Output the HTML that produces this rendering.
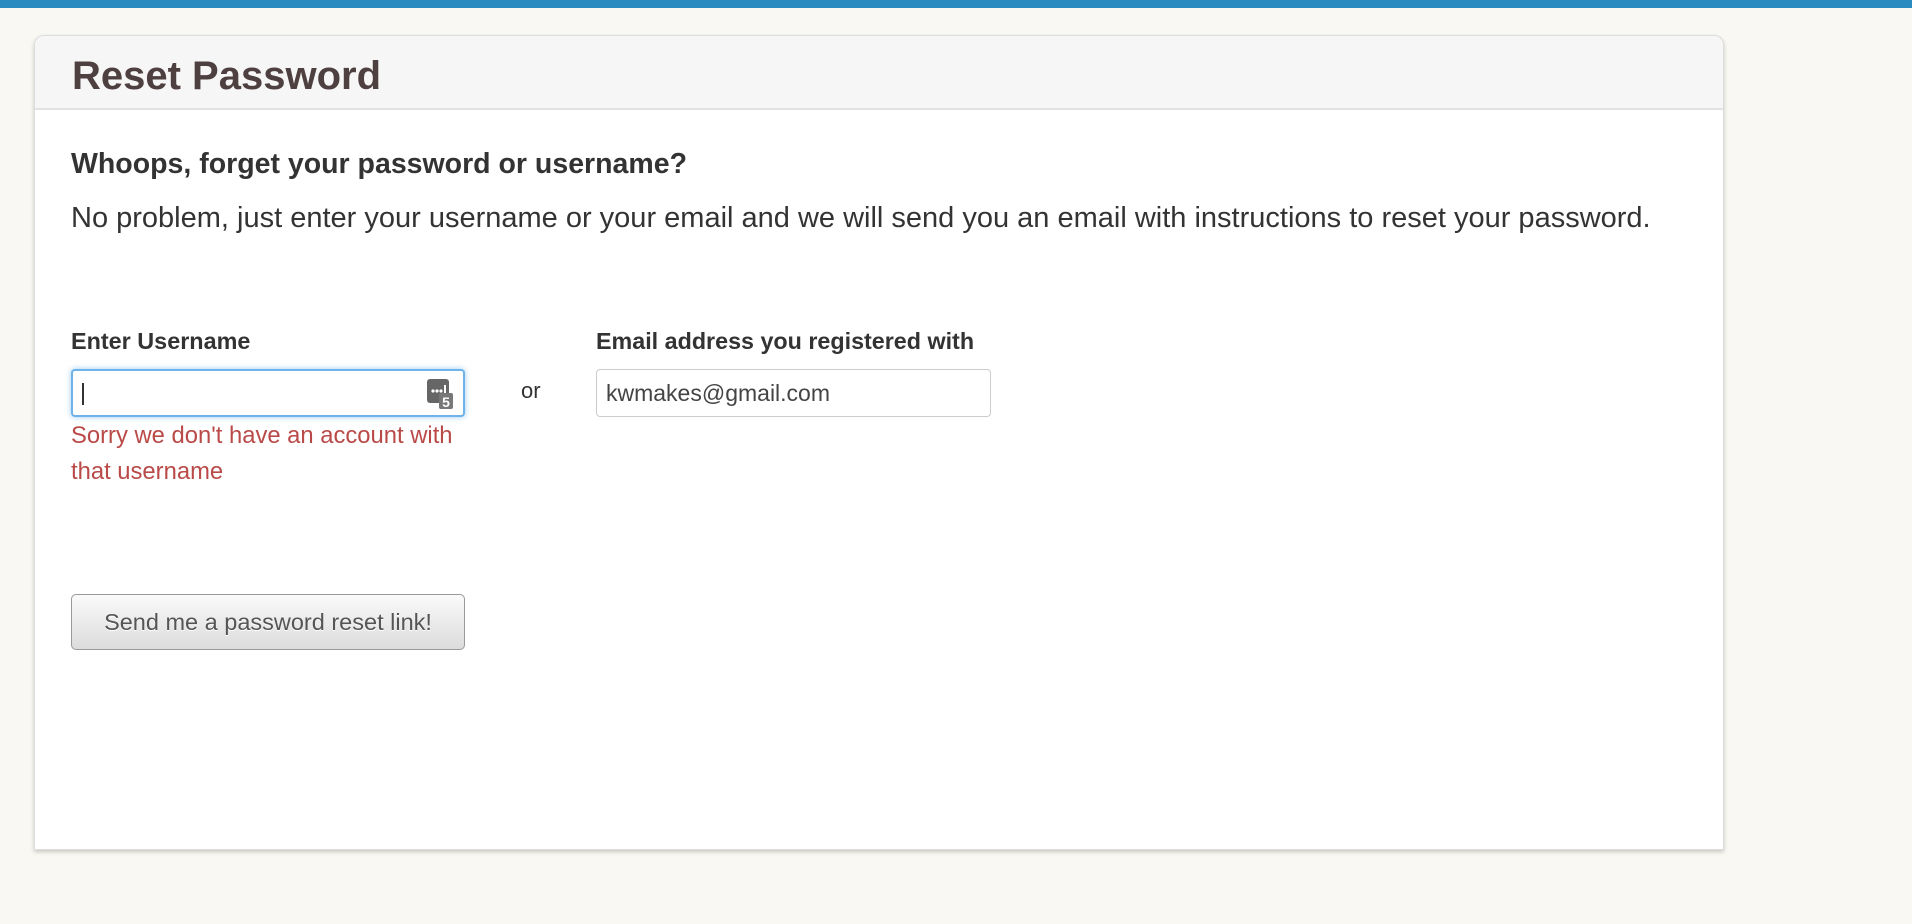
<!DOCTYPE html>
<html><head><meta charset="utf-8"><style>
*{box-sizing:border-box;margin:0;padding:0}
body{width:1912px;height:924px;background:#f9f8f3;font-family:"Liberation Sans",Arial,sans-serif;position:relative;overflow:hidden}
.bar{position:absolute;left:0;top:0;width:1912px;height:8px;background:#2a8bc0}
.card{position:absolute;left:34px;top:35px;width:1690px;height:815px;background:#fff;border:1px solid #ddd;border-radius:10px 10px 0 0;box-shadow:0 2px 4px rgba(0,0,0,.2)}
.hd{height:74px;background:#f6f6f6;border-bottom:2px solid #e2e2e2;border-radius:10px 10px 0 0;padding-left:37px}
.hd h1{font-size:40px;font-weight:bold;color:#4e4040;line-height:80px}
.t{position:absolute;white-space:nowrap;color:#333}
.inp{position:absolute;height:48px;border:1px solid #ccc;border-radius:4px;background:#fff;font-size:23px;color:#444;padding-left:9px;line-height:46px}
</style></head><body>
<div class="bar"></div>
<div class="card">
<div class="hd"><h1>Reset Password</h1></div>
</div>
<div class="t" style="left:71px;top:148px;font-size:28.5px;font-weight:bold">Whoops, forget your password or username?</div>
<div class="t" style="left:71px;top:202px;font-size:29px">No problem, just enter your username or your email and we will send you an email with instructions to reset your password.</div>
<div class="t" style="left:71px;top:328px;font-size:23.4px;font-weight:bold">Enter Username</div>
<div class="t" style="left:596px;top:328px;font-size:23.3px;font-weight:bold">Email address you registered with</div>
<div class="inp" style="left:71px;top:369px;width:394px;border:2px solid #6fb3ea;box-shadow:0 0 6px rgba(82,168,236,.6)">
<div style="position:absolute;left:9px;top:12px;width:2px;height:22px;background:#333"></div>
<svg style="position:absolute;right:8px;top:8px" width="28" height="32" viewBox="0 0 28 32"><rect x="0" y="0" width="22" height="24" rx="3" fill="#666"/><circle cx="6" cy="12" r="1.6" fill="#fff"/><circle cx="10" cy="12" r="1.6" fill="#fff"/><circle cx="14" cy="12" r="1.6" fill="#fff"/><rect x="17" y="6" width="2" height="8" fill="#fff"/><rect x="12" y="14" width="14" height="16" rx="2" fill="#777"/><text x="19" y="28" font-size="14" font-weight="bold" fill="#fff" text-anchor="middle" font-family="Liberation Sans">5</text></svg>
</div>
<div class="t" style="left:521px;top:378px;font-size:22px">or</div>
<div class="inp" style="left:596px;top:369px;width:395px">kwmakes@gmail.com</div>
<div class="t" style="left:71px;top:418px;font-size:23.8px;color:#b94a48;line-height:36px">Sorry we don't have an account with<br>that username</div>
<div style="position:absolute;left:71px;top:594px;width:394px;height:56px;border:1px solid #999;border-radius:5px;background:linear-gradient(#fafafa,#dcdcdc);font-size:23.5px;color:#555;text-align:center;line-height:54px;text-shadow:0 1px 0 #fff">Send me a password reset link!</div>
</body></html>
